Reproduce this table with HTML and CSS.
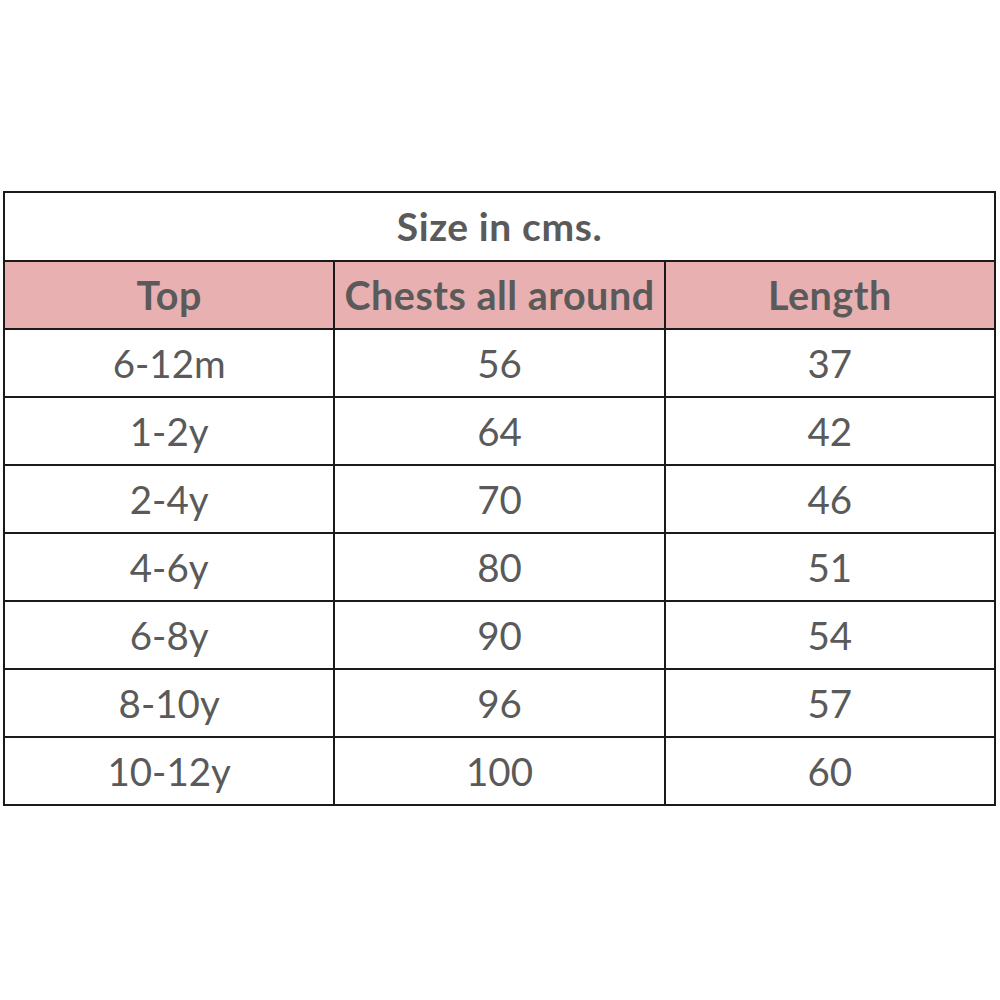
FILE: index.html
```html
<!DOCTYPE html>
<html>
<head>
<meta charset="utf-8">
<link rel="stylesheet" href="styles.css">
</head>
<body>
<div class="page">
<table class="sizes">
  <tr class="title"><td colspan="3">Size in cms.</td></tr>
  <tr class="head"><td>Top</td><td>Chests all around</td><td>Length</td></tr>
  <tr><td>6-12m</td><td>56</td><td>37</td></tr>
  <tr><td>1-2y</td><td>64</td><td>42</td></tr>
  <tr><td>2-4y</td><td>70</td><td>46</td></tr>
  <tr><td>4-6y</td><td>80</td><td>51</td></tr>
  <tr><td>6-8y</td><td>90</td><td>54</td></tr>
  <tr><td>8-10y</td><td>96</td><td>57</td></tr>
  <tr><td>10-12y</td><td>100</td><td>60</td></tr>
</table>
</div>
</body>
</html>
```
FILE: styles.css
```css
html, body {
  margin: 0;
  padding: 0;
  background: #ffffff;
}
.page {
  padding: 191px 0 0 3px;
}
.sizes {
  border-collapse: collapse;
  width: 993px;
  table-layout: fixed;
  font-family: "Lato", "Open Sans", sans-serif;
  color: #5a5a5a;
}
.sizes td {
  border: 2px solid #1a1a1a;
  text-align: center;
  height: 66px;
  padding: 0;
  font-size: 38.5px;
  line-height: 1;
  width: 33.33%;
}
.sizes .title td {
  font-weight: 700;
  font-size: 39px;
  letter-spacing: 0.6px;
  height: 67px;
}
.sizes .head td {
  background: #e8b0b1;
  font-weight: 700;
  font-size: 39.5px;
  letter-spacing: 0.5px;
}
```
